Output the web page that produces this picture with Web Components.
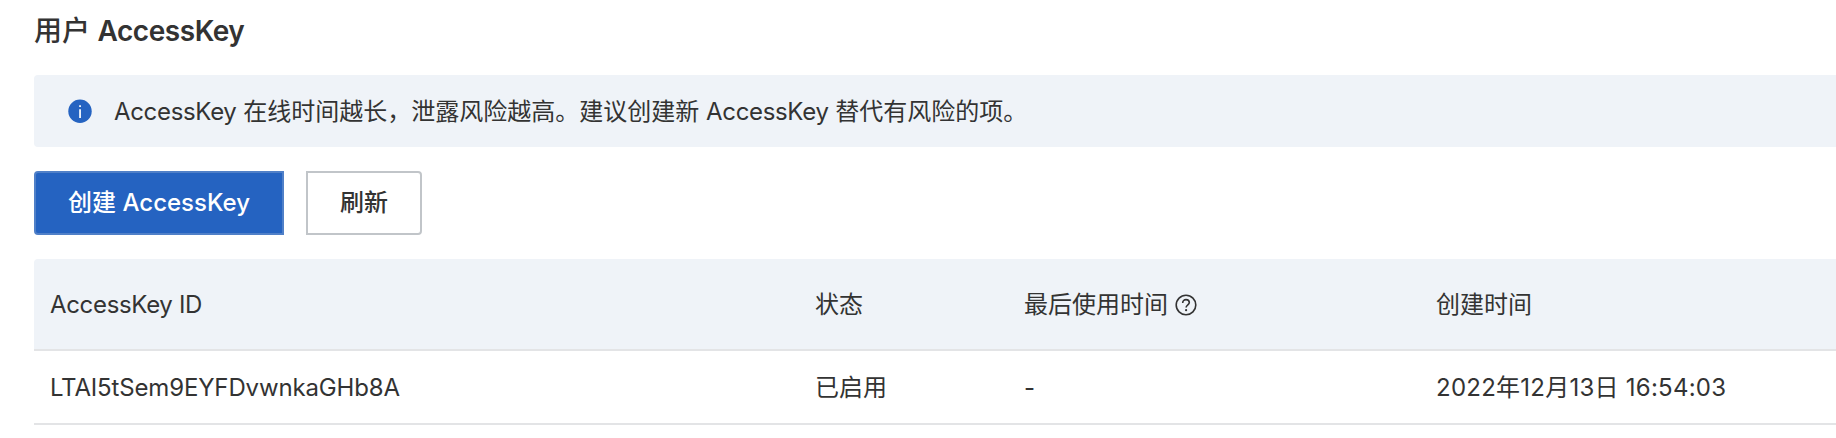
<!DOCTYPE html>
<html lang="zh-CN">
<head>
<meta charset="utf-8">
<title>用户 AccessKey</title>
<style>
html,body{margin:0;background:#fff}
body{font-family:Inter,"Noto Sans CJK SC",sans-serif;color:#333;overflow:hidden}
</style>
</head>
<body>
<ak-page></ak-page>
<script>
const define = (name, html) => {
  const t = document.createElement('template');
  t.innerHTML = html;
  customElements.define(name, class extends HTMLElement {
    constructor() {
      super();
      this.attachShadow({ mode: 'open' }).append(t.content.cloneNode(true));
    }
  });
};

define('ak-alert', `
<style>
:host{display:flex;align-items:center;box-sizing:border-box;height:72px;padding-left:34px;background:#eff3f8;border-radius:4px 0 0 4px;font-size:24px;line-height:36px;white-space:nowrap}
svg{width:24px;height:24px;margin-right:22px;flex:none}
div{padding-top:2px}
</style>
<svg viewBox="0 0 24 24"><circle cx="12" cy="12.3" r="11.7" fill="#2563c1"/><path d="M11.1 6.2h1.9v1.9h-1.9zM11.1 10.2h1.9v8.8h-1.9z" fill="#e9f0fa"/></svg>
<div><slot></slot></div>`);

define('ak-button', `
<style>
:host{display:flex;align-items:center;justify-content:center;box-sizing:border-box;height:64px;width:116px;border:2px solid #c1c5c9;border-radius:0 4px 4px 0;font-size:24px;font-weight:500;line-height:36px;white-space:nowrap}
:host([primary]){width:250px;background:#2563c1;border-color:#5080c8;border-radius:4px 0 0 4px;color:#fff}
</style><slot></slot>`);

define('ak-help', `
<style>:host{display:inline-flex;margin-left:7px}svg{width:22px;height:22px}</style>
<svg viewBox="0 0 22 22" fill="none" stroke="#333" stroke-width="1.6"><circle cx="11" cy="11" r="9.8"/><path d="M7.7 8.9C7.7 6.8 9.1 5.6 11 5.6s3.3 1.2 3.3 3c0 2.2-3.2 2.3-3.2 5"/><circle cx="11.1" cy="16.2" r="1.1" fill="#333" stroke="none"/></svg>`);

define('ak-row', `
<style>
:host{display:grid;grid-template-columns:765px 209px 412px 1fr;align-items:center;box-sizing:border-box;height:74px;padding:2px 0 0 16px;border-bottom:2px solid #e3e4e6;font-size:24px;line-height:36px;white-space:nowrap}
:host([head]){height:92px;background:#eff3f8;border-radius:4px 0 0 0}
::slotted(*){display:flex;align-items:center}
</style><slot></slot>`);

define('ak-page', `
<style>
:host{display:flex;flex-direction:column;padding-left:34px}
h1{margin:0;height:75px;font-size:28px;font-weight:500;line-height:63px;white-space:nowrap}
h1 span{font-weight:600;letter-spacing:-.45px}
.bar{display:flex;gap:22px;margin:24px 0}
.latin{letter-spacing:-.33px}
.id{letter-spacing:-.15px}
.date{letter-spacing:.25px}
</style>
<h1>用户 <span>AccessKey</span></h1>
<ak-alert><span class="latin">AccessKey</span> 在线时间越长，泄露风险越高。建议创建新 <span class="latin">AccessKey</span> 替代有风险的项。</ak-alert>
<div class="bar"><ak-button primary>创建 AccessKey</ak-button><ak-button>刷新</ak-button></div>
<ak-row head><span class="latin">AccessKey ID</span><span>状态</span><span>最后使用时间<ak-help></ak-help></span><span>创建时间</span></ak-row>
<ak-row><span class="id">LTAI5tSem9EYFDvwnkaGHb8A</span><span>已启用</span><span>-</span><span class="date">2022年12月13日 16:54:03</span></ak-row>`);
</script>
</body>
</html>
